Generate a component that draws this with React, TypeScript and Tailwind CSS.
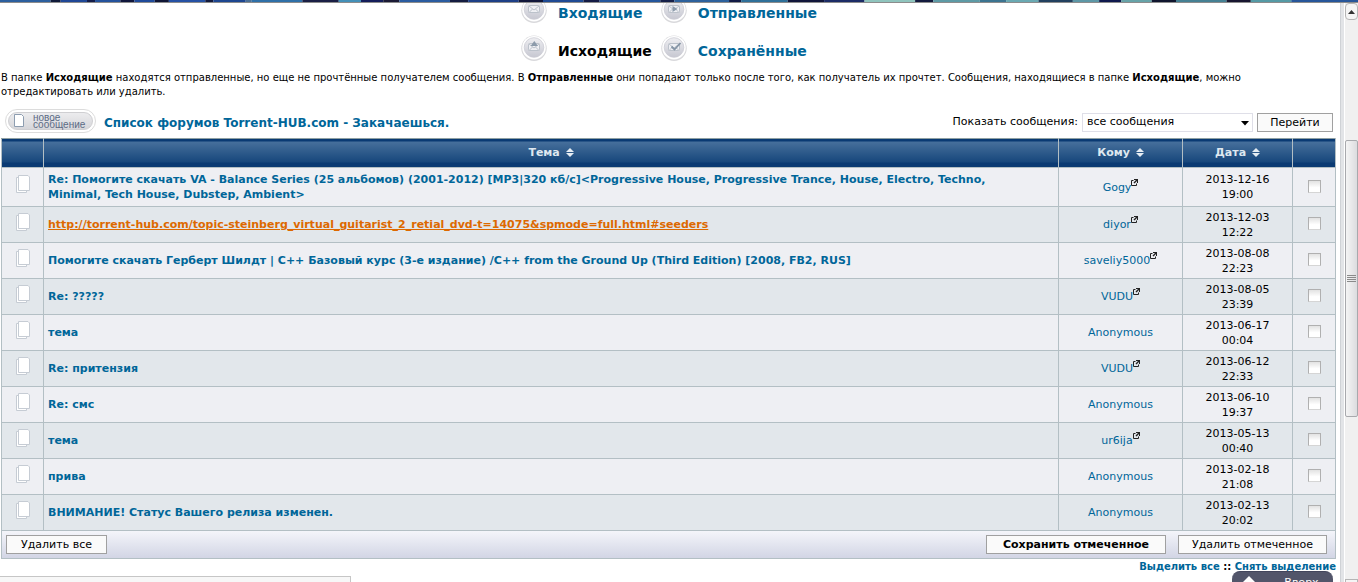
import React, { useState } from 'react';

type Message = { subject: string; to: string; external: boolean; date: string; time: string; active?: boolean };

const messages: Message[] = [
  {
    subject:
      'Re: Помогите скачать VA - Balance Series (25 альбомов) (2001-2012) [MP3|320 кб/с]<Progressive House, Progressive Trance, House, Electro, Techno, Minimal, Tech House, Dubstep, Ambient>',
    to: 'Gogy', external: true, date: '2013-12-16', time: '19:00',
  },
  {
    subject: 'http://torrent-hub.com/topic-steinberg_virtual_guitarist_2_retial_dvd-t=14075&spmode=full.html#seeders',
    to: 'diyor', external: true, date: '2013-12-03', time: '12:22', active: true,
  },
  {
    subject: 'Помогите скачать Герберт Шилдт | C++ Базовый курс (3-е издание) /C++ from the Ground Up (Third Edition) [2008, FB2, RUS]',
    to: 'saveliy5000', external: true, date: '2013-08-08', time: '22:23',
  },
  { subject: 'Re: ?????', to: 'VUDU', external: true, date: '2013-08-05', time: '23:39' },
  { subject: 'тема', to: 'Anonymous', external: false, date: '2013-06-17', time: '00:04' },
  { subject: 'Re: притензия', to: 'VUDU', external: true, date: '2013-06-12', time: '22:33' },
  { subject: 'Re: смс', to: 'Anonymous', external: false, date: '2013-06-10', time: '19:37' },
  { subject: 'тема', to: 'ur6ija', external: true, date: '2013-05-13', time: '00:40' },
  { subject: 'прива', to: 'Anonymous', external: false, date: '2013-02-18', time: '21:08' },
  { subject: 'ВНИМАНИЕ! Статус Вашего релиза изменен.', to: 'Anonymous', external: false, date: '2013-02-13', time: '20:02' },
];

type Glyph = 'inbox' | 'sent' | 'outbox' | 'saved';

function FolderIcon({ glyph }: { glyph: Glyph }) {
  return (
    <svg width="28" height="28" viewBox="0 0 28 28" aria-hidden="true">
      <defs>
        <linearGradient id={`disc-${glyph}`} x1="0" y1="0" x2="0" y2="1">
          <stop offset="0" stopColor="#efeff2" />
          <stop offset="1" stopColor="#c6c7d1" />
        </linearGradient>
      </defs>
      <circle cx="14" cy="14.3" r="12.7" fill="#d9d9dc" />
      <circle cx="14" cy="13.7" r="11.8" fill="#fff" />
      <circle cx="14" cy="13.5" r="9.8" fill={`url(#disc-${glyph})`} stroke="#cbccd4" strokeWidth="0.8" />
      <rect x="8.5" y="9.5" width="11" height="7" rx="1" fill="#eff0f4" stroke="#bcc2cb" />
      <path d="M9 10l5 4 5-4M9 16.5l3.5-3.5M19 16.5L15.500 13" fill="none" stroke="#bcc2cb" />
      {glyph === 'sent' && <path d="M12.500 10l5 3-5 3z" fill="#8c9bab" />}
      {glyph === 'outbox' && <path d="M14.300 7l3.700 5h-7.400z" fill="#8c9bab" />}
      {glyph === 'saved' && <path d="M11.500 12.500l3 3 6-6.500" fill="none" stroke="#8494a5" strokeWidth="1.800" />}
    </svg>
  );
}

function FolderLink({ glyph, label, current }: { glyph: Glyph; label: string; current?: boolean }) {
  return (
    <div className="flex items-center gap-2.5">
      <FolderIcon glyph={glyph} />
      {current ? (
        <strong className="pt-1.5 text-sm">{label}</strong>
      ) : (
        <a href="#" className="pt-1.5 text-sm font-bold text-[#006699]">{label}</a>
      )}
    </div>
  );
}

function SortMark() {
  return (
    <svg className="ml-0.5 inline-block" width="8" height="9" viewBox="0 0 8 9" aria-hidden="true">
      <path d="M4 0l4 4H0zM4 9l4-4H0z" fill="#e6edf3" />
    </svg>
  );
}

function ExternalMark() {
  return (
    <svg className="mb-2.5 inline-block" width="7" height="7" viewBox="0 0 7 7" aria-hidden="true">
      <path d="M2.500 1.500h-2v5h5v-2" fill="none" stroke="#222" />
      <path d="M3 0h4v4H6V2L3.500 4.500l-1-1L5 1H3z" fill="#222" />
    </svg>
  );
}

function PagesIcon() {
  return (
    <svg className="mx-auto mb-1.5" width="14" height="18" viewBox="0 0 14 18" role="img" aria-label="Сообщение">
      <path d="M.5 2.500h10v15H.500z" fill="#fff" stroke="#c6ccd4" />
      <path d="M2.500.500h9.500l1.500 1.500v13.500h-11z" fill="#fff" stroke="#c6ccd4" />
    </svg>
  );
}

const bannerTiles = [
  ['#2c5f9e', 50], ['#101a3a', 10], ['#1f4796', 26], ['#131c4a', 8], ['#24529c', 25], ['#10163c', 14], ['#1f4a9a', 20],
  ['#0f1535', 14], ['#2551a4', 36], ['#131a3d', 8], ['#1d4690', 32], ['#4a6f95', 6], ['#2f70a8', 50], ['#1a1f45', 36],
  ['#4490b8', 22], ['#141d5a', 22], ['#1b1a35', 16], ['#2a5ca0', 50], ['#141c40', 18], ['#1d3f86', 50], ['#10163a', 24],
  ['#1f4a94', 40], ['#141b45', 16], ['#24569c', 60], ['#152049', 14], ['#2d619c', 54], ['#121a45', 12], ['#2f7099', 46],
  ['#11163a', 36], ['#1c2c66', 40], ['#8fc4bd', 50], ['#131a3e', 18], ['#5d9aa5', 46], ['#3c7490', 26], ['#6aa9b2', 32],
  ['#22405f', 34], ['#5d97a6', 26], ['#10194e', 22], ['#67a3a8', 30], ['#10152e', 24], ['#458093', 50], ['#181630', 24],
  ['#559aa5', 40], ['#27569a', 66],
] as const;

function Banner() {
  const starts = bannerTiles.map((_, i) => bannerTiles.slice(0, i).reduce((sum, tile) => sum + tile[1], 0));
  const total = bannerTiles.reduce((sum, tile) => sum + tile[1], 0);
  return (
    <svg className="block h-[3px] w-full shrink-0" viewBox={`0 0 ${total} 3`} preserveAspectRatio="none" aria-hidden="true">
      {bannerTiles.map(([color, width], i) => (
        <rect key={i} x={starts[i]} y="0" width={width} height="3" fill={color} />
      ))}
      <rect x="0" y="2" width={total} height="1" fill="#8c8c8c" />
    </svg>
  );
}

const buttonClass = 'h-[19px] whitespace-nowrap border border-[#a0a0a0] bg-[#fafafa] text-[11px] leading-[15px]';
const headClass = 'border border-[#b3bfc4] border-t-[#8fa0a3] text-[11px] font-bold text-[#dfe8f0]';
const cellClass = 'border border-[#b3bfc4] text-center';

export default function App() {
  const [selected, setSelected] = useState<boolean[]>(messages.map(() => false));
  const setAll = (value: boolean) => setSelected(messages.map(() => value));

  return (
    <div className="relative flex h-screen flex-col overflow-hidden bg-white font-['Verdana','DejaVu_Sans',sans-serif] text-[11px] text-black">
      <Banner />
      <div className="flex min-h-0 flex-1">
        <main className="min-w-0 flex-1 overflow-hidden pl-px pr-1">
          <nav className="flex h-16 items-end justify-center overflow-hidden">
            <div className="grid shrink-0 auto-rows-[38px] grid-cols-[auto_auto] gap-x-2">
              <FolderLink glyph="inbox" label="Входящие" />
              <FolderLink glyph="sent" label="Отправленные" />
              <FolderLink glyph="outbox" label="Исходящие" current />
              <FolderLink glyph="saved" label="Сохранённые" />
            </div>
          </nav>

          <p className="pt-1 text-[10px] leading-[14px]">
            В папке <b>Исходящие</b> находятся отправленные, но еще не прочтённые получателем сообщения. В <b>Отправленные</b>{' '}
            они попадают только после того, как получатель их прочтет. Сообщения, находящиеся в папке <b>Исходящие</b>, можно
            отредактировать или удалить.
          </p>

          <div className="flex h-[39px] items-center justify-between pl-1 pr-[3px] pt-2">
            <div className="flex items-center gap-2">
              <button className="mb-1 h-6 w-[91px] rounded-full border border-[#dcdcdc] bg-white p-[2px]">
                <span className="flex h-full items-center gap-1 rounded-full border border-[#cfcfd2] bg-linear-to-b from-[#ececee] to-[#d6d6da] pl-1">
                  <svg width="12" height="13" viewBox="0 0 12 13" aria-hidden="true">
                    <path d="M1.500.500h7l2 2v10h-9z" fill="#fff" stroke="#8d9db0" />
                  </svg>
                  <span className="pl-1 text-left font-['Liberation_Sans',sans-serif] text-[10px] leading-[7px] text-[#5c6b85]">
                    новое
                    <br />
                    сообщение
                  </span>
                </span>
              </button>
              <a href="#" className="text-[12px] font-bold text-[#006699]">Список форумов Torrent-HUB.com - Закачаешься.</a>
            </div>
            <form className="flex items-center gap-1" onSubmit={(e) => e.preventDefault()}>
              <label htmlFor="period">Показать сообщения:</label>
              <div className="relative flex">
                <select id="period" className="h-[19px] w-[171px] appearance-none border border-[#dfdfe8] bg-white pl-1 text-[11px]">
                  <option>все сообщения</option>
                </select>
                <svg className="pointer-events-none absolute right-1 top-2" width="8" height="5" viewBox="0 0 8 5" aria-hidden="true">
                  <path d="M0 0h8L4 4.500z" fill="#000" />
                </svg>
              </div>
              <button className={`${buttonClass} w-[76px]`}>Перейти</button>
            </form>
          </div>

          <table className="w-full table-fixed border-collapse border border-[#b3bfc4]">
            <colgroup>
              <col className="w-[42px]" />
              <col />
              <col className="w-[124px]" />
              <col className="w-[110px]" />
              <col className="w-[43px]" />
            </colgroup>
            <thead>
              <tr className="h-[29px] bg-[linear-gradient(#0a3a73_2px,#466f9b_3px,#17477c_23px,#0a3a73_24px)]">
                <th className={headClass} aria-label="Статус" />
                <th className={headClass}>Тема <SortMark /></th>
                <th className={headClass}>Кому <SortMark /></th>
                <th className={headClass}>Дата <SortMark /></th>
                <th className={headClass} aria-label="Отметить" />
              </tr>
            </thead>
            <tbody className="leading-[15px]">
              {messages.map((m, i) => (
                <tr key={i} className="h-9 bg-[#eeeff3] first:h-[39px] even:bg-[#e2e7eb]">
                  <td className={cellClass}><PagesIcon /></td>
                  <td className="border border-[#b3bfc4] pl-1 pr-6 text-left font-bold">
                    <a href="#" className={m.active ? 'text-[#dd6900] underline' : 'text-[#006699]'}>{m.subject}</a>
                  </td>
                  <td className={cellClass}>
                    <a href="#" className="text-[#006699]">{m.to}</a>
                    {m.external && <ExternalMark />}
                  </td>
                  <td className={cellClass}>{m.date}<br />{m.time}</td>
                  <td className={cellClass}>
                    <input
                      type="checkbox"
                      aria-label={`Отметить: ${m.subject}`}
                      checked={selected[i]}
                      onChange={() => setSelected(selected.map((v, n) => (n === i ? !v : v)))}
                      className="mx-auto mb-0.5 block size-[13px] appearance-none border border-[#b0b0b0] border-b-[#d5d5d5] bg-linear-to-b from-[#e2e2e2] to-white to-60% checked:from-[#006699]"
                    />
                  </td>
                </tr>
              ))}
            </tbody>
            <tfoot>
              <tr className="h-7 bg-linear-to-b from-[#f4f5fa] to-[#d1d4e4]">
                <td colSpan={5} className="border border-[#b3bfc4] pl-1 pr-2">
                  <div className="flex items-center gap-3">
                    <button className={`${buttonClass} mr-auto w-[101px]`}>Удалить все</button>
                    <button className={`${buttonClass} w-[180px] font-bold`}>Сохранить отмеченное</button>
                    <button className={`${buttonClass} w-[149px]`}>Удалить отмеченное</button>
                  </div>
                </td>
              </tr>
            </tfoot>
          </table>

          <div className="text-right text-[10px] font-bold leading-[15px]">
            <a href="#" className="text-[#006699]" onClick={() => setAll(true)}>Выделить все</a> ::{' '}
            <a href="#" className="text-[#006699]" onClick={() => setAll(false)}>Снять выделение</a>
          </div>
        </main>

        <aside className="flex w-[18px] shrink-0 border-l border-[#cfd2d6] bg-[#e2e4e7]" aria-hidden="true">
          <div className="ml-[3px] flex flex-1 flex-col border-l border-white bg-[#f0f0f0]">
            <div className="flex h-[17px] items-center justify-center rounded-sm border border-[#b5b5b5] bg-[#f5f5f5]">
              <svg width="7" height="4" viewBox="0 0 7 4"><path d="M3.500 0L7 4H0z" fill="#333" /></svg>
            </div>
            <div className="flex-[120]" />
            <div className="flex flex-[276] items-center justify-center rounded-xs border border-[#a8a9ad] bg-linear-to-r from-[#f5f5f5] to-[#dcdcdf]">
              <svg width="9" height="7" viewBox="0 0 9 7"><path d="M0 .500h9M0 2.500h9M0 4.500h9M0 6.500h9" stroke="#8a8a8a" /></svg>
            </div>
            <div className="flex-[162]" />
            <div className="h-[3px] border border-b-0 border-[#b5b5b5] bg-[#f5f5f5]" />
          </div>
        </aside>
      </div>

      <div className="absolute bottom-0 left-0 h-1.5 w-[351px] border-r border-t border-[#c6c6c6] bg-[#f7f7f7]" />
      <a href="#" className="absolute bottom-0 right-[25px] flex h-[11px] w-[101px] justify-center gap-7 overflow-hidden rounded-t-lg border-t border-[#42455c] bg-[#52556a] pr-1 pt-1 text-[11px] leading-[14px] text-white">
        <svg width="14" height="14" viewBox="0 0 14 14" aria-hidden="true"><path d="M7 0l7 7H0z" fill="#fff" /></svg>
        <span>Вверх</span>
      </a>
    </div>
  );
}
